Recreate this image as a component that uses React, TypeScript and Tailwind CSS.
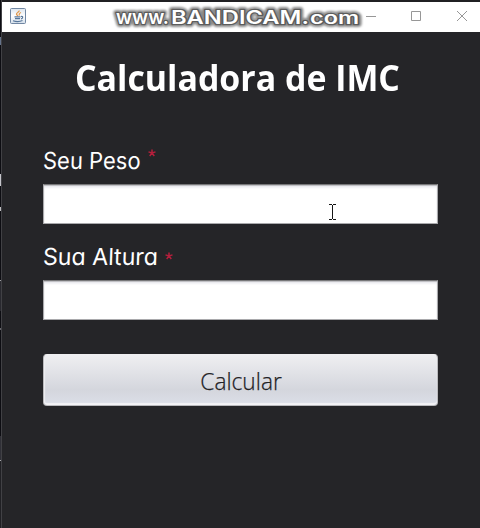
import React from "react";

function JavaIcon() {
  return (
    <svg width="16" height="16" viewBox="0 0 16 16" fill="none">
      <defs>
        <linearGradient id="tile" x1="0" y1="0" x2="0" y2="1">
          <stop offset="0" stopColor="#dce5ee" />
          <stop offset=".5" stopColor="#ffffff" />
          <stop offset="1" stopColor="#d3deea" />
        </linearGradient>
      </defs>
      <rect x=".5" y=".5" width="15" height="15" rx="1" fill="url(#tile)" stroke="#7187a3" />
      <path d="M9 2.500C10 4 6 4.500 6.500 6.500L8 8M11 4.500C8.500 5.500 9 6 9.500 7.500" stroke="#e0994f" strokeWidth="1.300" />
      <path d="M4.500 8.800H10.500M5 10.700H10M3 12.800C6 13.800 10 13.700 12.500 12.500M11 8.500C13.500 7.800 13 10.500 11 10.800" stroke="#58779b" strokeWidth="1.200" />
    </svg>
  );
}

function Watermark() {
  return (
    <svg width="256" height="30" viewBox="0 0 256 30" className="shrink-0">
      <defs>
        <filter id="halo" x="-5%" y="-30%" width="110%" height="160%">
          <feGaussianBlur stdDeviation="1" />
        </filter>
      </defs>
      {[true, false].map((halo) => (
        <g
          key={String(halo)}
          fill="#fff"
          stroke={halo ? "#898989" : "#5c5c5c"}
          strokeWidth={halo ? 6 : 2.6}
          strokeLinejoin="round"
          paintOrder="stroke"
          filter={halo ? "url(#halo)" : undefined}
          className="font-['Inter','Liberation_Sans',sans-serif] font-semibold"
        >
          <text x="6" y="21.500" fontSize="19" textLength="53" lengthAdjust="spacingAndGlyphs">www.</text>
          <text x="61" y="21.800" fontSize="19" textLength="138" lengthAdjust="spacingAndGlyphs">BANDICAM.</text>
          <text x="200" y="21.800" fontSize="17" textLength="49" lengthAdjust="spacingAndGlyphs">com</text>
        </g>
      ))}
    </svg>
  );
}

function TitleBar() {
  return (
    <header className="flex h-[30px] shrink-0 bg-white">
      <div className="mt-1.5 ml-2 w-4 shrink-0"><JavaIcon /></div>
      <div className="ml-[84px] w-[256px] shrink-0"><Watermark /></div>
      <svg width="114" height="30" viewBox="0 0 114 30" fill="none" stroke="#979797" className="shrink-0">
        <path d="M0 14.500H10M45.500 9.500H54.500V18.500H45.500ZM91 9L101 19M101 9L91 19" />
      </svg>
    </header>
  );
}

function Asterisk() {
  return (
    <svg width="8" height="8" viewBox="0 0 8 8" stroke="#b51f3c" strokeWidth="1.500">
      <path d="M4 .5V4M.5 2.900L4 4L7.500 2.900M1.700 7L4 4L6.300 7" fill="none" />
    </svg>
  );
}

const labelFont =
  "font-['Comic_Sans_MS','Inter',sans-serif] text-[23.5px] leading-8 text-white whitespace-pre [font-feature-settings:'cv11']";
const inputStyle =
  "block h-10 w-[395px] border border-[#a9a9ac] border-t-[#777779] bg-white shadow-[inset_0_1px_1px_#bcbcc0,inset_0_3px_2px_#f0f0f4] outline-none";

export default function App() {
  return (
    <div className="flex h-[528px] w-[480px] overflow-hidden bg-[#252528]">
      <div className="flex w-0.5 shrink-0 flex-col border-r border-[#414145] bg-[#0d0d12]">
        <div className="mt-[37px] h-2 bg-[#65738a]" />
        <div className="mt-[129px] h-3 bg-[#c5c5cb]" />
        <div className="mt-[21px] h-1 bg-[#bdbdc0]" />
        <div className="mt-[69px] h-px bg-[#a0a0a4]" />
        <div className="h-[30px] bg-[#29292f]" />
        <div className="mt-[17px] h-0.5 bg-[#66666b]" />
        <div className="mt-[106px] h-6 bg-[#303037]" />
        <div className="h-px bg-[#aaaaae]" />
        <div className="flex-1 bg-[#202024]" />
      </div>
      <div className="flex w-[478px] shrink-0 flex-col border-t-2 border-[#202023]">
        <TitleBar />
        <main className="flex flex-col pl-[41px]">
          <h1 className="mt-[22px] ml-8 h-12 origin-left scale-x-[.968] font-['Open_Sans','Noto_Sans',sans-serif] text-[35px] leading-12 font-bold whitespace-nowrap text-white">
            Calculadora de IMC
          </h1>
          <div className="mt-[42px] flex h-8">
            <label htmlFor="peso" className={`${labelFont} w-[105px]`}>
              <span className="inline-block origin-left translate-y-px scale-x-[.935] -skew-x-2">Seu Peso</span>
            </label>
            <div className="mt-[5px]"><Asterisk /></div>
          </div>
          <input id="peso" className={`${inputStyle} mt-2`} />
          <div className="mt-4 flex h-8">
            <label htmlFor="altura" className={`${labelFont} w-[122px]`}>
              <span className="inline-block origin-left translate-y-px scale-x-[.985] -skew-x-2">Sua Altura</span>
            </label>
            <div className="mt-3"><Asterisk /></div>
          </div>
          <input id="altura" className={`${inputStyle} mt-2`} />
          <button className="mt-[34px] h-[52px] w-[395px] rounded-[4px] border border-[#bababd] border-t-[#efeff1] bg-linear-to-b from-[#efeff1] via-[#d4d6dd] via-70% to-[#dcdfe8] pt-0.5 font-['Open_Sans',sans-serif] text-[24px] font-light text-[#222225] shadow-[inset_0_-2px_1px_#f3f3f6,inset_1px_0_1px_#efeff2]">
            <span className="inline-block translate-x-px scale-x-[.945] [-webkit-text-stroke:0.25px_#222225]">Calcular</span>
          </button>
        </main>
      </div>
      <svg width="7" height="16" viewBox="0 0 7 16" fill="none" stroke="#151515" className="absolute top-[204px] left-[329px]">
        <path d="M0 .5H3M4 .5H7M0 15.500H3M4 15.500H7M3.500 1V15" />
      </svg>
    </div>
  );
}
